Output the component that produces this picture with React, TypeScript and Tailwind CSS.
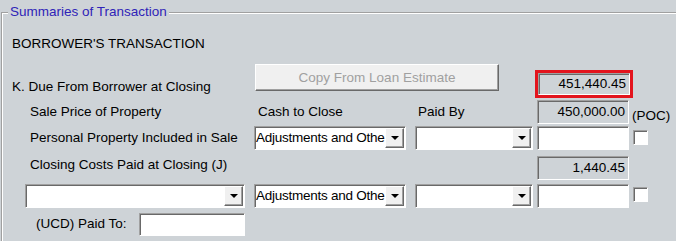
import React from "react";

const sunken =
  "border border-t-[#a0a0a0] border-l-[#a0a0a0] border-b-white border-r-white shadow-[inset_1px_1px_0_#696969]";

function Arrow() {
  return (
    <div className="mt-[1px] mr-[1px] mb-[1px] w-[19px] flex items-center justify-center bg-[#f0f0f0] border border-t-white border-l-white border-b-[#696969] border-r-[#696969] shadow-[inset_-1px_-1px_0_#a0a0a0]">
      <svg width="8" height="4" viewBox="0 0 8 4">
        <polygon points="0,0 8,0 4,4" fill="#000" />
      </svg>
    </div>
  );
}

function Select({ className, text }: { className: string; text?: string }) {
  return (
    <div className={`flex h-[24px] bg-white ${sunken} ${className}`}>
      <div className="flex-1 overflow-hidden whitespace-nowrap pl-[1px] leading-[22px] tracking-[-0.25px]">
        {text}
      </div>
      <Arrow />
    </div>
  );
}

function Field({
  className,
  value,
  white,
}: {
  className: string;
  value?: string;
  white?: boolean;
}) {
  return (
    <div
      className={`${sunken} ${white ? "bg-white" : ""} text-right pr-[3px] whitespace-nowrap flex items-center justify-end ${className}`}
    >
      {value}
    </div>
  );
}

function Check({ className }: { className: string }) {
  return <div className={`w-[15px] h-[15px] bg-white ${sunken} ${className}`} />;
}

export default function App() {
  return (
    <div className="w-[676px] h-[241px] overflow-hidden bg-[#ced3d7] font-['Liberation_Sans',Arial,sans-serif] text-[13.5px] leading-[16px] text-black">
      <div className="relative pt-[12px] h-full">
        <span className="absolute top-[4px] left-[8px] px-[2px] bg-[#ced3d7] text-[#2f23b8] leading-[16px]">
          Summaries of Transaction
        </span>
        <div className="ml-[1px] h-full border-t border-l border-[#a0a0a0]">
          <div className="h-full border-t border-l border-white">
            {/* Section title */}
            <div className="mt-[22px] h-[16px] pl-[9px]">BORROWER'S TRANSACTION</div>

            {/* Row K */}
            <div className="mt-[12px] h-[34px] flex items-start">
              <div className="w-[251px] pl-[9px] pt-[15px] whitespace-nowrap">
                K. Due From Borrower at Closing
              </div>
              <div className="ml-[1px] w-[244px] h-[27px] flex items-center justify-center bg-[#f0f0f0] text-[#a0a0a0] border border-t-white border-l-white border-b-[#696969] border-r-[#696969] shadow-[inset_-1px_-1px_0_#a0a0a0]">
                Copy From Loan Estimate
              </div>
              <div className="ml-[36px] mt-[6px] w-[98px] h-[28px] border-[3px] border-[#e3141d]">
                <Field className="w-full h-full" value="451,440.45" />
              </div>
            </div>

            {/* Sale price row */}
            <div className="mt-[2px] h-[24px] flex">
              <div className="w-[251px] pl-[27px] self-center whitespace-nowrap">
                Sale Price of Property
              </div>
              <div className="w-[161px] pl-[4px] self-center whitespace-nowrap">Cash to Close</div>
              <div className="w-[122px] pl-[3px] self-center whitespace-nowrap">Paid By</div>
              <Field className="w-[92px] h-[24px]" value="450,000.00" />
              <div className="ml-[3px] self-end whitespace-nowrap">(POC)</div>
            </div>

            {/* Personal property row */}
            <div className="mt-[2px] h-[24px] flex items-start">
              <div className="w-[251px] pl-[27px] leading-[24px] whitespace-nowrap">
                Personal Property Included in Sale
              </div>
              <Select className="w-[152px]" text="Adjustments and Othe" />
              <Select className="ml-[9px] w-[118px]" />
              <Field className="ml-[4px] w-[92px] h-[24px]" white />
              <Check className="ml-[4px] mt-[4px]" />
            </div>

            {/* Closing costs row */}
            <div className="mt-[6px] h-[24px] flex items-start">
              <div className="w-[534px] pl-[27px] pt-[1px] whitespace-nowrap">
                Closing Costs Paid at Closing (J)
              </div>
              <Field className="w-[92px] h-[24px]" value="1,440.45" />
            </div>

            {/* Row 4 */}
            <div className="mt-[4px] h-[24px] flex items-start">
              <div className="w-[251px] pl-[22px]">
                <Select className="w-[220px]" />
              </div>
              <Select className="w-[152px]" text="Adjustments and Othe" />
              <Select className="ml-[9px] w-[118px]" />
              <Field className="ml-[4px] w-[92px] h-[24px]" white />
              <Check className="ml-[4px] mt-[3px]" />
            </div>

            {/* UCD row */}
            <div className="mt-[5px] h-[23px] flex items-start">
              <div className="w-[136px] pl-[33px] leading-[21px] whitespace-nowrap">
                (UCD) Paid To:
              </div>
              <Field className="w-[106px] h-[23px]" white />
            </div>
          </div>
        </div>
      </div>
    </div>
  );
}
